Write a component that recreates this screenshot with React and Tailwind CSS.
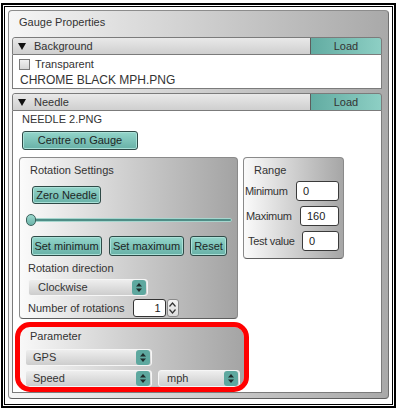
import React from "react";

const font = { fontFamily: '"Liberation Sans", Arial, sans-serif' };

const TealButton = ({ w, h, children }) => (
  <div
    className={`flex items-center justify-center rounded-[3px] border border-[#2f4a47] bg-gradient-to-b from-[#93d5ca] to-[#68b1a7] text-[11px] leading-none text-[#1d2625] shadow-[inset_0_0_0_1px_#a9e0d7] ${w} ${h}`}
  >
    {children}
  </div>
);

const Arrows = () => (
  <svg width="6" height="9" viewBox="0 0 6 9">
    <polygon points="3,0 6,3.5 0,3.5" fill="#1e2b2a" />
    <polygon points="0,5.5 6,5.5 3,9" fill="#1e2b2a" />
  </svg>
);

const Select = ({ w, pl, children }) => (
  <div
    className={`flex h-[17px] items-center rounded-[3px] border border-[#f6f6f6] bg-gradient-to-b from-[#eeeeee] to-[#cdcdcd] text-[11px] text-[#333] ${w}`}
  >
    <span className={`flex-1 ${pl}`}>{children}</span>
    <span className="mr-[1px] flex h-[15px] w-[14px] items-center justify-center rounded-[3px] bg-[#5ea89f]">
      <Arrows />
    </span>
  </div>
);

const SectionHeader = ({ title }) => (
  <div className="flex h-[18px] rounded-t-[3px] border border-[#7b7b7b] text-[11px] text-[#333]">
    <div className="flex flex-1 items-center rounded-tl-[3px] bg-gradient-to-b from-[#e9e9e9] to-[#cfcfcf] pl-[5px]">
      <svg width="8" height="7" viewBox="0 0 8 7" className="mr-[8px]">
        <polygon points="0,0 8,0 4,7" fill="#111" />
      </svg>
      {title}
    </div>
    <div className="flex w-[71px] items-center justify-center rounded-tr-[3px] border-l border-[#5d5d5d] bg-gradient-to-r from-[#62aca2] to-[#8dcfc4]">
      Load
    </div>
  </div>
);

const RangeRow = ({ label, ml, w, value, mt }) => (
  <div className={`flex h-[20px] items-center ${mt}`}>
    <span className={`text-[11px] tracking-[-0.3px] text-[#333] ${ml}`}>{label}</span>
    <div
      className={`ml-auto mr-[4px] flex h-full items-center rounded-[3px] border border-[#3a3a3a] bg-white pl-[6px] text-[11px] text-[#222] ${w}`}
    >
      {value}
    </div>
  </div>
);

export default function App() {
  return (
    <div className="h-[411px] w-[400px] bg-white pl-[1px] pt-[3px]" style={font}>
      <div className="h-[405px] w-[395px] border-2 border-black p-[1px]">
        <div className="h-full border border-black bg-white p-[3px]">
          <div className="h-[389px] rounded-[4px] border border-[#8c8c8c] border-b-[#5e5e5e] border-r-[#6e6e6e] bg-gradient-to-r from-[#f6f6f6] to-[#a9a9a9] pt-[3px]">
            <div className="pl-[10px] text-[11px] leading-[16px] text-[#333]">Gauge Properties</div>

            <div className="ml-[3px] mr-[6px] mt-[7px]">
              {/* Background */}
              <SectionHeader title="Background" />
              <div className="h-[34px] border-x border-b border-[#7b7b7b] bg-white pt-[1px] text-[#333]">
                <div className="flex h-[16px] items-center pl-[6px] text-[11px]">
                  <span className="mr-[5px] h-[11px] w-[11px] border border-[#7a7a7a] bg-gradient-to-b from-[#f0f0f0] to-[#d6d6d6]" />
                  Transparent
                </div>
                <div className="pl-[7px] text-[12px] leading-[16px]">CHROME BLACK MPH.PNG</div>
              </div>

              {/* Needle */}
              <div className="mt-[4px]">
                <SectionHeader title="Needle" />
                <div className="h-[282px] border-x border-b border-[#7b7b7b] bg-white">
                  <div className="pl-[9px] text-[11px] leading-[16px] text-[#333]">NEEDLE 2.PNG</div>
                  <div className="ml-[9px] mt-[4px]">
                    <TealButton w="w-[116px]" h="h-[19px]">Centre on Gauge</TealButton>
                  </div>

                  <div className="ml-[6px] mt-[7px] flex items-start gap-[5px]">
                    {/* Rotation settings */}
                    <div className="h-[162px] w-[219px] rounded-[4px] border border-[#8a8a8a] border-b-[#5e5e5e] bg-gradient-to-r from-[#fbfbfb] to-[#a3a3a3] pt-[4px]">
                      <div className="pl-[10px] text-[11px] leading-[16px] text-[#333]">Rotation Settings</div>
                      <div className="ml-[12px] mt-[8px]">
                        <TealButton w="w-[69px]" h="h-[18px]">Zero Needle</TealButton>
                      </div>
                      <div className="relative ml-[6px] mt-[10px] flex h-[12px] w-[206px] items-center">
                        <div className="h-[4px] w-full rounded-full border border-[#a6d6ce] bg-[#4e8d86]" />
                        <div className="absolute left-0 top-0 h-[12px] w-[10px] rounded-full border border-[#3d625d] bg-gradient-to-b from-[#9bd9ce] to-[#6cb3a9]" />
                      </div>
                      <div className="ml-[11px] mt-[10px] flex h-[20px]">
                        <TealButton w="w-[71px]" h="h-[20px]">Set minimum</TealButton>
                        <div className="ml-[7px]">
                          <TealButton w="w-[75px]" h="h-[20px]">Set maximum</TealButton>
                        </div>
                        <div className="ml-[6px]">
                          <TealButton w="w-[37px]" h="h-[20px]">Reset</TealButton>
                        </div>
                      </div>
                      <div className="ml-[8px] mt-[4px] text-[11px] leading-[16px] text-[#333]">Rotation direction</div>
                      <div className="ml-[8px] mt-[3px]">
                        <Select w="w-[120px]" pl="pl-[9px]">Clockwise</Select>
                      </div>
                      <div className="ml-[8px] mt-[3px] flex h-[18px] items-center text-[11px] text-[#333]">
                        <span>Number of rotations</span>
                        <div className="ml-[8px] flex h-full w-[33px] items-center justify-end rounded-[3px] border border-[#333] bg-white pr-[4px] text-[#222]">
                          1
                        </div>
                        <div className="ml-[1px] flex h-full w-[12px] flex-col items-center justify-center gap-[2px] rounded-[3px] border border-[#8a8a8a] bg-gradient-to-b from-[#f4f4f4] to-[#dcdcdc]">
                          <svg width="7" height="5" viewBox="0 0 7 5">
                            <polyline points="0.5,4.5 3.5,1 6.5,4.5" fill="none" stroke="#333" strokeWidth="1.2" />
                          </svg>
                          <svg width="7" height="5" viewBox="0 0 7 5">
                            <polyline points="0.5,0.5 3.5,4 6.5,0.5" fill="none" stroke="#333" strokeWidth="1.2" />
                          </svg>
                        </div>
                      </div>
                    </div>

                    {/* Range */}
                    <div className="h-[102px] w-[101px] rounded-[4px] border border-[#8a8a8a] border-b-[#5e5e5e] bg-gradient-to-r from-[#fbfbfb] to-[#a6a6a6] pt-[4px]">
                      <div className="pl-[10px] text-[11px] leading-[16px] text-[#333]">Range</div>
                      <RangeRow label="Minimum" ml="ml-[1px]" w="w-[43px]" value="0" mt="mt-[3px]" />
                      <RangeRow label="Maximum" ml="ml-[2px]" w="w-[39px]" value="160" mt="mt-[5px]" />
                      <RangeRow label="Test value" ml="ml-[4px]" w="w-[37px]" value="0" mt="mt-[5px]" />
                    </div>
                  </div>

                  {/* Parameter */}
                  <div className="ml-[7px] mt-[8px] h-[60px] w-[224px] rounded-[10px] bg-gradient-to-r from-[#f8f8f8] to-[#a4a4a4] pt-[1px] outline-[5px] outline-[#ff0000] outline-solid">
                    <div className="pl-[10px] text-[11px] leading-[16px] text-[#333]">Parameter</div>
                    <div className="ml-[5px] mt-[5px]">
                      <Select w="w-[127px]" pl="pl-[7px]">GPS</Select>
                    </div>
                    <div className="ml-[5px] mt-[4px] flex gap-[6px]">
                      <Select w="w-[127px]" pl="pl-[7px]">Speed</Select>
                      <Select w="w-[82px]" pl="pl-[8px]">mph</Select>
                    </div>
                  </div>
                </div>
              </div>
            </div>
          </div>
        </div>
      </div>
    </div>
  );
}
